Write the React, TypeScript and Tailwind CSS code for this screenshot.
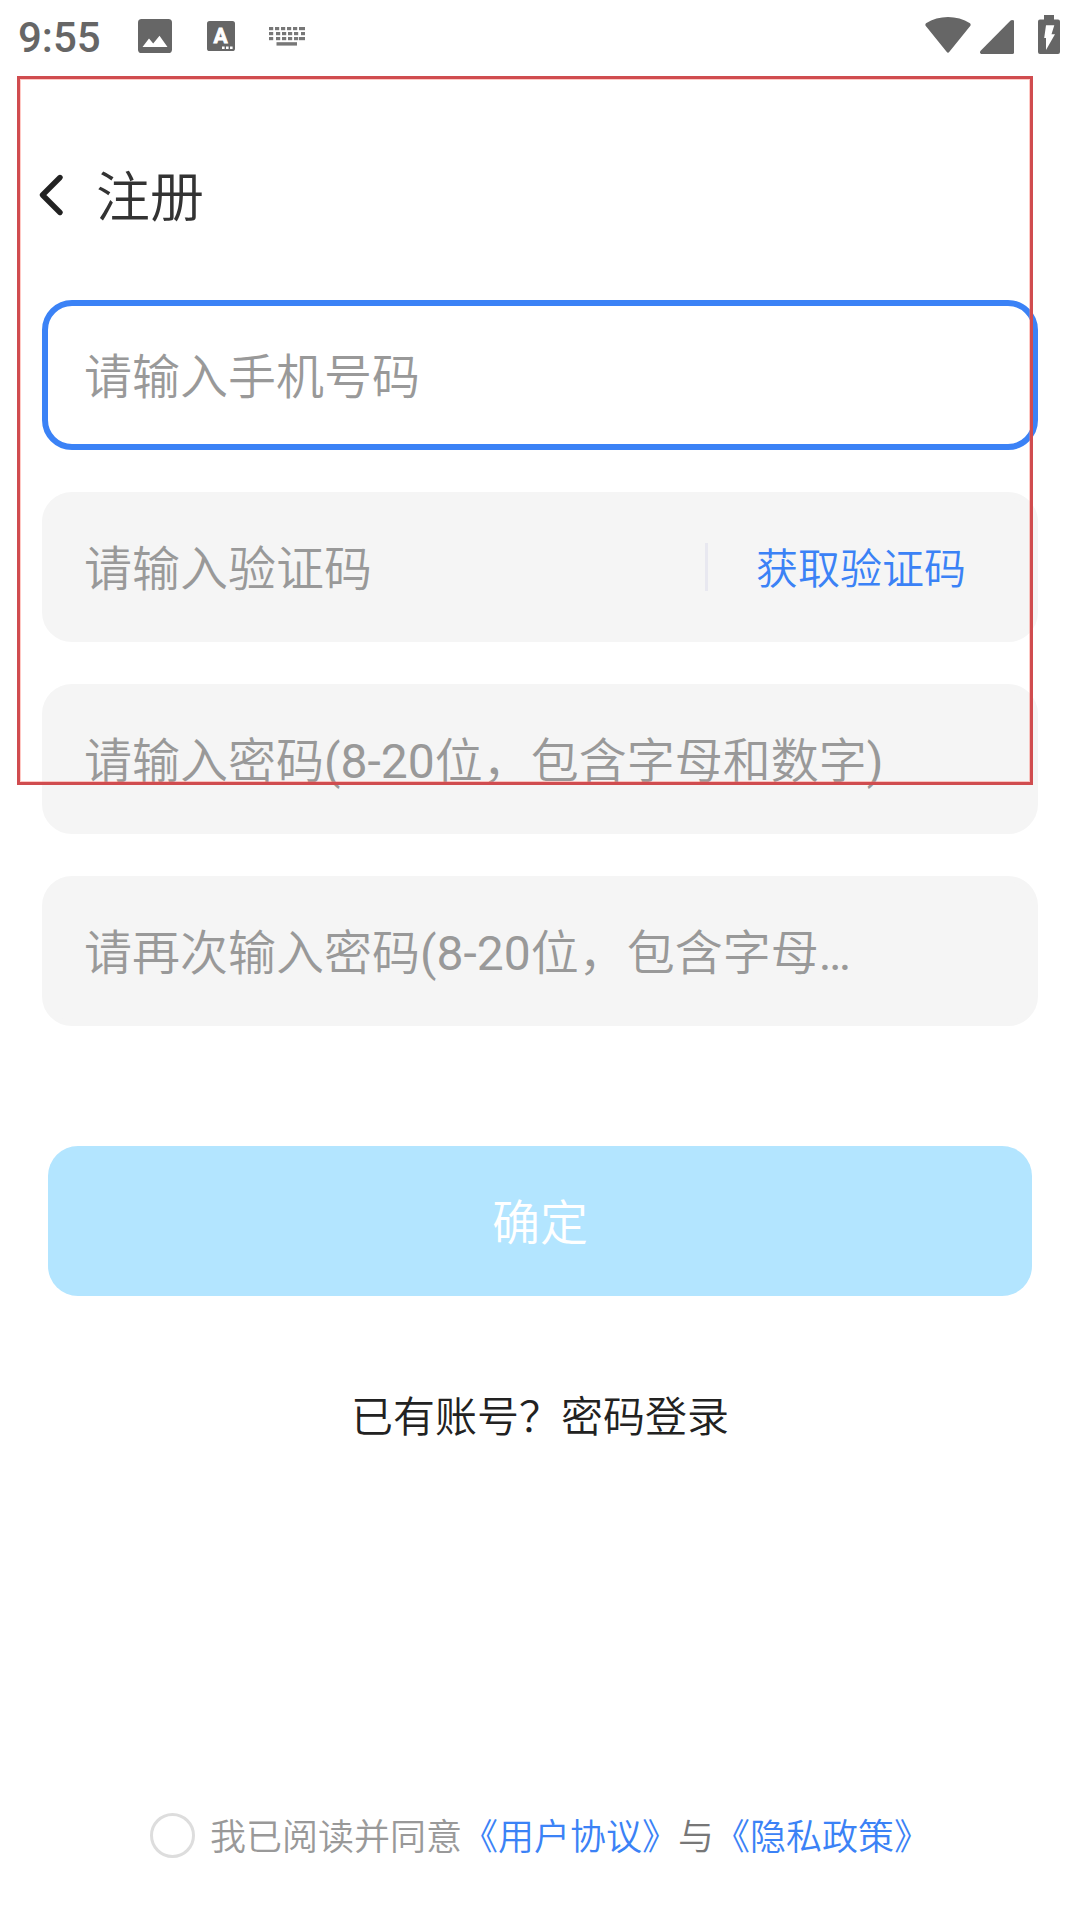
import clsx from "clsx";
import type { ReactNode } from "react";

const KEY_ROWS = [
  { y: 27, keys: [269, 275, 281, 287, 293, 299] },
  { y: 32, keys: [269, 276, 282, 288, 294, 301] },
  { y: 37, keys: [269, 276, 282, 288, 294, 299] },
];

function ImageIcon() {
  return (
    <svg width="34" height="34" viewBox="0 0 34 34">
      <rect width="34" height="34" rx="3.6" fill="#666" />
      <path d="M4.5 28 L11 19.5 L15.2 24.5 L21.5 16.8 L29.5 28 Z" fill="#fff" />
    </svg>
  );
}

function InputMethodIcon() {
  return (
    <svg width="28" height="30" viewBox="0 0 28 30">
      <rect width="28" height="30" rx="2.6" fill="#666" />
      <text
        x="13.6"
        y="21.8"
        textAnchor="middle"
        fontSize="21"
        fontWeight="700"
        fill="#fff"
        stroke="#fff"
        strokeWidth="0.8"
        className="font-['Roboto',sans-serif]"
      >
        A
      </text>
      <path d="M15 25.4h2.6v2.6H15zM19 25.4h2.6v2.6H19zM23 25.4h2.6v2.6H23z" fill="#fff" />
    </svg>
  );
}

function KeyboardIcon() {
  return (
    <svg width="36" height="19" viewBox="269 27 36 19" fill="#777">
      {KEY_ROWS.map((row) =>
        row.keys.map((x, i) => (
          <rect
            key={`${row.y}-${x}`}
            x={x}
            y={row.y}
            width={i === row.keys.length - 1 ? 305 - x : 4.2}
            height="3.2"
          />
        )),
      )}
      <rect x="276.5" y="42.2" width="20.5" height="3.4" />
    </svg>
  );
}

function StatusBar() {
  return (
    <header className="flex h-[72px] items-center pl-[18px] pr-5">
      <span className="w-[120px] pt-1 font-['Roboto',sans-serif] text-[42px] font-medium leading-none text-[#666]">
        9:55
      </span>
      <ImageIcon />
      <span className="w-[35px]" />
      <InputMethodIcon />
      <span className="w-[34px]" />
      <KeyboardIcon />
      <svg className="ml-auto mb-[2px]" width="46" height="36" viewBox="0 0 46 36" fill="#666">
        <path d="M1 6.2 C14 -2 32 -2 45 6.2 Q46.2 7.4 45.2 9 L24.4 34.8 Q23 36.6 21.6 34.8 L0.8 9 Q-0.2 7.4 1 6.2 Z" />
      </svg>
      <svg className="ml-[9px] mt-[2px]" width="34" height="34" viewBox="0 0 34 34" fill="#666">
        <path d="M30.6 0.6 Q32 -0.4 34 0.6 V32.4 Q34 34 32.4 34 H1.2 Q-0.6 33 0.4 31 Z" />
      </svg>
      <svg className="ml-6 mb-[3px]" width="22" height="39" viewBox="0 0 22 39">
        <path
          d="M6 0h10v4.5h4Q22 4.5 22 6.5V37Q22 39 20 39H2Q0 39 0 37V6.5Q0 4.5 2 4.5h4Z"
          fill="#666"
        />
        <path d="M8 10.3h8.3l-2.8 9H17L8 35V23H6.2Z" fill="#fff" />
      </svg>
    </header>
  );
}

type FieldProps = {
  placeholder: string;
  focused?: boolean;
  children?: ReactNode;
};

function Field({ placeholder, focused, children }: FieldProps) {
  return (
    <div
      className={clsx(
        "flex h-[150px] items-center rounded-[30px] border-[6px] pl-9",
        focused ? "border-[#3b82f6] bg-white" : "border-[#f5f5f5] bg-[#f5f5f5]",
      )}
    >
      <span className="whitespace-nowrap pt-[6px] text-[48px] leading-none text-[#999]">
        {placeholder}
      </span>
      {children}
    </div>
  );
}

export default function App() {
  return (
    <div
      lang="zh-CN"
      className="relative flex h-[1920px] w-[1080px] flex-col overflow-hidden bg-white font-['Roboto','Noto_Sans_CJK_SC_DemiLight','Noto_Sans_CJK_SC',sans-serif]"
    >
      <StatusBar />

      <div className="mt-[78px] flex h-[90px] items-center pl-[37px]">
        <svg width="28" height="44" viewBox="0 0 28 44" fill="none">
          <path
            d="M23 4.5 L5.5 22 L23 39.5"
            stroke="#222"
            strokeWidth="5.4"
            strokeLinecap="round"
            strokeLinejoin="round"
          />
        </svg>
        <h1 className="ml-[31px] pt-[7px] text-[54px] leading-none text-[#333]">注册</h1>
      </div>

      <main className="mt-[60px] flex flex-col gap-[42px] px-[42px]">
        <Field placeholder="请输入手机号码" focused />
        <Field placeholder="请输入验证码">
          <span className="ml-auto h-12 w-[3px] bg-[#e8e8f0]" />
          <button
            type="button"
            className="ml-12 mr-[66px] pt-[5px] text-[42px] leading-none text-[#3b82f6]"
          >
            获取验证码
          </button>
        </Field>
        <Field placeholder="请输入密码(8-20位，包含字母和数字)" />
        <Field placeholder="请再次输入密码(8-20位，包含字母…" />
      </main>

      <button
        type="button"
        className="mx-12 mt-[120px] h-[150px] rounded-[30px] bg-[#b3e5ff] pt-[6px] text-[48px] leading-none text-white"
      >
        确定
      </button>

      <p className="mt-[101px] text-center text-[42px] leading-[42px] text-[#222]">
        已有账号？密码登录
      </p>

      <div className="mb-[62px] mt-auto flex h-[45px] items-center pl-[150px] text-[36px] leading-none text-[#999]">
        <span className="mr-[15px] size-[45px] rounded-full border-[3px] border-[#ddd]" />
        <p className="pt-[5px]">
          <span>我已阅读并同意</span>
          <span className="text-[#3b82f6]">《用户协议》</span>
          <span className="text-[#777]">与</span>
          <span className="text-[#3b82f6]">《隐私政策》</span>
        </p>
      </div>

      {/* highlight frame over the upper part of the form */}
      <div className="pointer-events-none absolute left-[17px] top-[76px] h-[709px] w-[1016px] border-[3px] border-[#d04c4f] shadow-[inset_0_0_0_1px_rgba(255,120,110,0.4)]" />
    </div>
  );
}
